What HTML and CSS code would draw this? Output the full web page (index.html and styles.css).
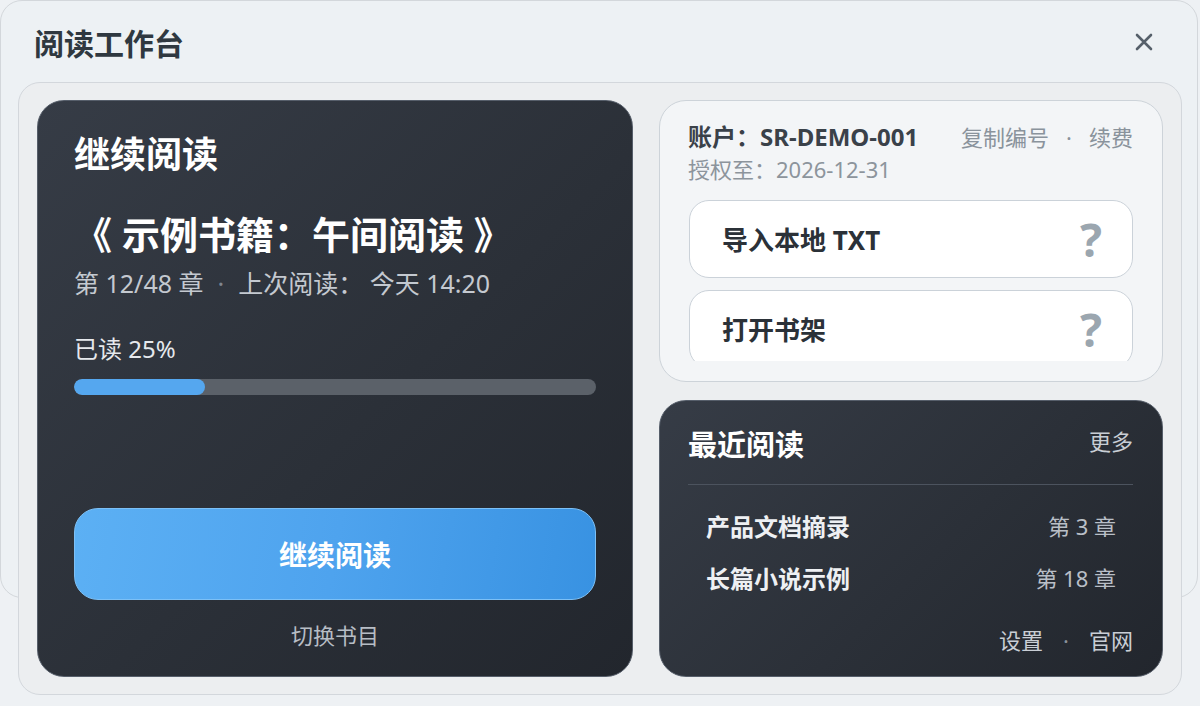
FILE: index.html
```html
<!DOCTYPE html>
<html lang="zh-CN">
<head>
    <meta charset="UTF-8">
    <meta name="viewport" content="width=device-width, initial-scale=1.0">
    <title>阅读工作台</title>
    <link rel="stylesheet" href="styles.css">
</head>
<body>
    <div class="window">
        <!-- 标题栏 -->
        <div class="header">
            <h1 class="header-title">阅读工作台</h1>
            <button class="close-btn" aria-label="关闭">
                <svg width="18" height="18" viewBox="0 0 18 18">
                    <path d="M2 2 L16 16 M16 2 L2 16" stroke="#56606a" stroke-width="2.6" stroke-linecap="round" fill="none"/>
                </svg>
            </button>
        </div>

        <div class="content">
            <!-- 继续阅读 -->
            <div class="card dark current">
                <h2 class="current-title">继续阅读</h2>
                <div class="book-title">《 示例书籍：午间阅读 》</div>
                <div class="book-meta">第 12/48 章<span class="dot">·</span>上次阅读： 今天 14:20</div>
                <div class="progress-label">已读 25%</div>
                <div class="progress">
                    <div class="progress-fill" style="width: 25%;"></div>
                </div>
                <button class="primary-btn">继续阅读</button>
                <a class="switch-link">切换书目</a>
            </div>

            <div class="side">
                <!-- 账户 -->
                <div class="card light account">
                    <div class="account-row">
                        <span class="account-id">账户：SR-DEMO-001</span>
                        <span class="account-links">复制编号<span class="dot">·</span>续费</span>
                    </div>
                    <div class="account-expire">授权至：2026-12-31</div>
                    <div class="action-list">
                        <button class="action-btn"><span>导入本地 TXT</span><span class="help">?</span></button>
                        <button class="action-btn"><span>打开书架</span><span class="help">?</span></button>
                    </div>
                </div>

                <!-- 最近阅读 -->
                <div class="card dark recent">
                    <div class="recent-head">
                        <h2 class="recent-title">最近阅读</h2>
                        <a class="more">更多</a>
                    </div>
                    <div class="recent-list">
                        <div class="recent-item">
                            <span class="recent-name">产品文档摘录</span>
                            <span class="recent-chapter">第 3 章</span>
                        </div>
                        <div class="recent-item">
                            <span class="recent-name">长篇小说示例</span>
                            <span class="recent-chapter">第 18 章</span>
                        </div>
                    </div>
                    <div class="recent-footer">设置<span class="dot">·</span>官网</div>
                </div>
            </div>
        </div>
    </div>
</body>
</html>
```

FILE: styles.css
```css
body {
    margin: 0;
    background: #eef1f4;
    font-family: "Noto Sans", "Noto Sans CJK SC", sans-serif;
    color: #2d363e;
}

h1, h2 {
    margin: 0;
}

button {
    font-family: inherit;
    cursor: pointer;
}

/* 外层窗口: 外框只有 598px 高, 内容会超出 */
.window {
    position: relative;
    width: 1198px;
}

.window::before {
    content: "";
    position: absolute;
    left: 0;
    top: 0;
    width: 1198px;
    height: 598px;
    box-sizing: border-box;
    border: 1px solid #d3d7db;
    border-radius: 22px;
    background: #edf1f4;
    z-index: -1;
}

.header {
    height: 82px;
    box-sizing: border-box;
    padding: 1px 45px 0 34px;
    display: flex;
    align-items: center;
    justify-content: space-between;
}

.header-title {
    font-size: 30px;
    font-weight: 700;
    color: #2f3840;
}

.close-btn {
    background: none;
    border: none;
    padding: 0;
    width: 18px;
    height: 18px;
    display: flex;
}

/* 内容区 */
.content {
    margin: 0 16px 0 18px;
    height: 613px;
    box-sizing: border-box;
    border: 1px solid #d3d7dc;
    border-radius: 22px;
    background: #eceef0;
    padding: 17px 18px;
    display: grid;
    grid-template-columns: 596px 504px;
    gap: 26px;
}

.card {
    box-sizing: border-box;
    border-radius: 27px;
}

.card.dark {
    background: linear-gradient(135deg, #363c46 0%, #2b3038 55%, #22262d 100%);
    border: 1px solid #565e6a;
    color: #fff;
}

.card.light {
    background: #f3f5f7;
    border: 1px solid #cdd3d9;
}

/* 继续阅读 */
.current {
    display: flex;
    flex-direction: column;
    padding: 32px 36px 26px;
}

.current-title {
    font-size: 36px;
    line-height: 44px;
    font-weight: 700;
}

.book-title {
    margin-top: 32px;
    font-size: 38px;
    line-height: 50px;
    font-weight: 700;
}

.book-meta {
    margin-top: 8px;
    font-size: 25px;
    line-height: 32px;
    color: #c4c9d0;
}

.book-meta .dot {
    margin: 0 14px;
    color: #7f8690;
}

.progress-label {
    margin-top: 34px;
    font-size: 24px;
    line-height: 32px;
    color: #e6e9ed;
}

.progress {
    margin-top: 14px;
    height: 16px;
    border-radius: 8px;
    background: #5b6169;
    overflow: hidden;
}

.progress-fill {
    height: 100%;
    border-radius: 8px;
    background: #55a7ef;
}

.primary-btn {
    margin-top: auto;
    height: 92px;
    border-radius: 24px;
    border: 1px solid #7cc0f6;
    background: linear-gradient(100deg, #5cb0f4 0%, #4ea3ee 50%, #3892e2 100%);
    color: #fff;
    font-size: 28px;
    font-weight: 700;
}

.switch-link {
    margin-top: 20px;
    text-align: center;
    font-size: 22px;
    line-height: 30px;
    color: #b7bdc5;
}

/* 右侧 */
.side {
    display: flex;
    flex-direction: column;
    gap: 18px;
}

.account {
    height: 282px;
    padding: 20px 29px 20px 28px;
    display: flex;
    flex-direction: column;
}

.account-row {
    display: flex;
    justify-content: space-between;
    align-items: center;
    line-height: 32px;
}

.account-id {
    font-size: 24px;
    font-weight: 700;
    color: #3a4149;
}

.account-links {
    font-size: 22px;
    color: #8a939c;
}

.account-links .dot {
    margin: 0 17px;
}

.account-expire {
    font-size: 22px;
    line-height: 32px;
    color: #8c949c;
}

.action-list {
    margin-top: 15px;
    flex: 1;
    overflow: hidden;
    display: flex;
    flex-direction: column;
    gap: 12px;
    padding-left: 1px;
}

.action-btn {
    flex-shrink: 0;
    height: 78px;
    border-radius: 20px;
    border: 1px solid #cbd2d9;
    background: #fff;
    display: flex;
    align-items: center;
    justify-content: space-between;
    padding: 0 30px 0 32px;
    font-size: 26px;
    font-weight: 700;
    color: #2b3138;
}

.help {
    font-size: 46px;
    line-height: 1;
    font-weight: 700;
    color: #9ba6af;
}

/* 最近阅读 */
.recent {
    flex: 1;
    padding: 26px 29px 22px 28px;
    display: flex;
    flex-direction: column;
}

.recent-head {
    display: flex;
    justify-content: space-between;
    align-items: flex-start;
}

.recent-title {
    font-size: 29px;
    line-height: 36px;
    font-weight: 700;
}

.more {
    font-size: 22px;
    line-height: 28px;
    color: #c9ced5;
}

.recent-list {
    margin-top: 21px;
    border-top: 1px solid #4c535e;
    padding-top: 14px;
}

.recent-item {
    height: 52px;
    display: flex;
    align-items: center;
    justify-content: space-between;
    padding: 0 17px 0 18px;
}

.recent-name {
    font-size: 24px;
    font-weight: 700;
    color: #eef0f3;
}

.recent-chapter {
    font-size: 22px;
    color: #b9bfc7;
}

.recent-footer {
    margin-top: auto;
    text-align: right;
    font-size: 22px;
    line-height: 28px;
    color: #c9ced5;
}

.recent-footer .dot {
    margin: 0 20px;
    color: #8a919a;
}
```
